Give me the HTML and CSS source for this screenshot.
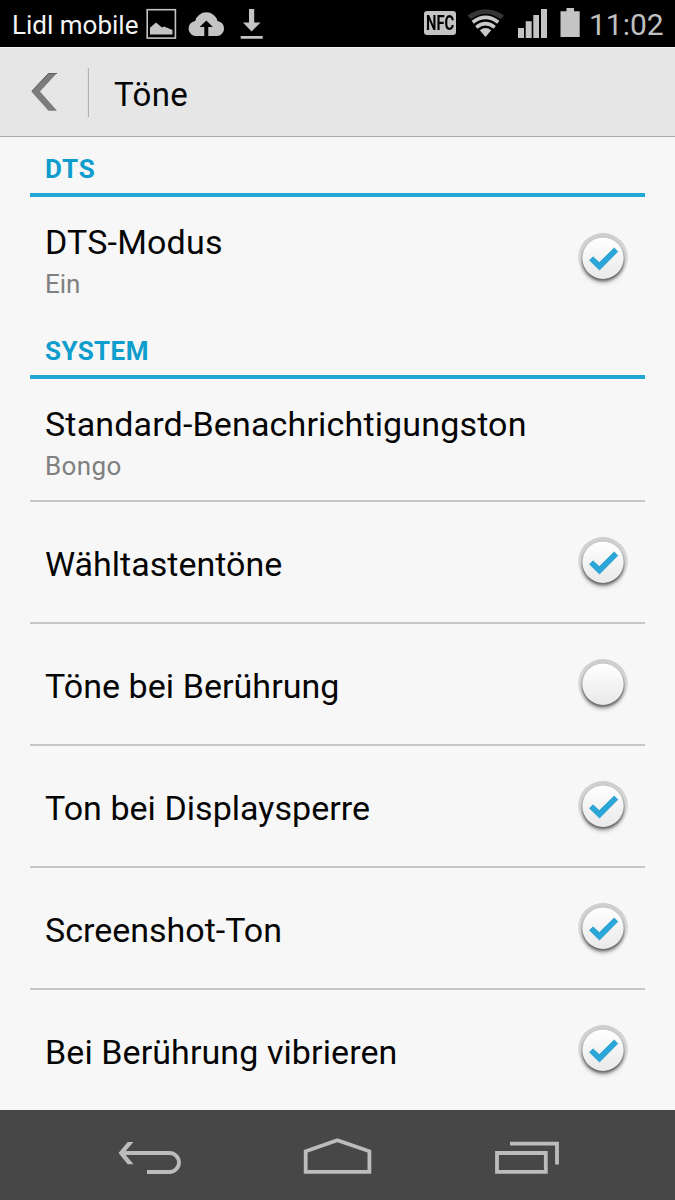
FILE: index.html
```html
<!DOCTYPE html>
<html lang="de">
<head>
<meta charset="utf-8">
<title>Töne</title>
<link rel="stylesheet" href="styles.css">
</head>
<body>
<svg class="defs" width="0" height="0">
  <defs>
    <linearGradient id="knob" x1="0" y1="0" x2="0" y2="1"><stop offset="0" stop-color="#fff"/><stop offset="1" stop-color="#e9e9e9"/></linearGradient>
    <linearGradient id="ring" x1="0" y1="0" x2="0" y2="1"><stop offset="0" stop-color="#cdcdcd"/><stop offset=".5" stop-color="#dadada"/><stop offset="1" stop-color="#f5f5f5"/></linearGradient>
    <filter id="soft" x="-30%" y="-30%" width="160%" height="170%"><feGaussianBlur stdDeviation="2"/></filter>
    <filter id="edge" x="-20%" y="-20%" width="140%" height="140%"><feGaussianBlur stdDeviation=".8"/></filter>
    <symbol id="off" viewBox="0 0 60 64">
      <circle cx="30" cy="29" r="25" fill="url(#ring)"/>
      <circle cx="30" cy="33.500" r="20" fill="#888" opacity=".75" filter="url(#soft)"/>
      <circle cx="30" cy="30.600" r="21" fill="#606060" filter="url(#edge)"/>
      <circle cx="30" cy="29.200" r="20.700" fill="url(#knob)"/>
    </symbol>
    <symbol id="on" viewBox="0 0 60 64">
      <use href="#off"/>
      <path d="M16.500 31.300l3.500-3.500 6.300 5.800 14.900-14.700 3.600 3.700-18.300 18.500z" fill="#2aa7d8" stroke="#168fc2" stroke-width=".6"/>
    </symbol>
  </defs>
</svg>
<div class="status">
  <span class="carrier">Lidl mobile</span>
  <svg class="notices" viewBox="144 0 124 47"><rect x="147.2" y="9.7" width="28.2" height="28.4" fill="none" stroke="#c4c4c4" stroke-width="1.6"/><path d="M150 34.500v-6.700l6-5.300 6 5 2-1 8.500 3.500v4.500z" fill="#c4c4c4"/><path fill="#c4c4c4" fill-rule="evenodd" d="M197 36a7.600 7.600 0 0 1-1.800-15.100 11.500 11.500 0 0 1 22.300 0A7.600 7.600 0 0 1 215.500 36H208.300V27H212.800L206.300 20.500 199.600 27H204.300V36z"/><path fill="#c4c4c4" d="M249 9h5.200v13.500h6.300l-9 9-8.500-9h6zM240.700 36h22v2.800h-22z"/></svg>
  <span class="fill"></span>
  <span class="nfc"><span>NFC</span></span>
  <svg class="signals" viewBox="464 0 120 47"><path d="M467.500 15.500Q485.500 2.800 504 15.500L500.700 19.300Q485.500 8.300 471 19.300z" fill="#363636"/><g fill="none" stroke="#c9c9c9" stroke-width="3.600"><path d="M472.700 22.300Q485.500 12.500 498.300 22.300"/><path d="M476.300 27.300Q485.500 20 494.700 27.300"/></g><path d="M479.800 30.200Q485.500 26 491.200 30.200L485.500 37z" fill="#c9c9c9"/><path d="M518 28h6v10h-6zM525.700 21.300h6V38h-6zM533.300 15h5.700v23h-5.700zM541 9h6v29h-6zM560.500 11.300h6V8h7.500v3.300h5.700V37h-19.200z" fill="#c4c4c4"/></svg>
  <span class="clock">11:02</span>
</div>
<header class="header">
  <svg class="back" width="26" height="40" viewBox="31 72 26 40"><path d="M48.500 73h8.500L40 91.500 57 110.700h-8.500L31.300 91.500z" fill="#7c7c7c"/><path d="M48.500 73.500h8.500M32 91L48.500 73.500" stroke="#5f5f5f" fill="none"/></svg>
  <span class="divider"></span>
  <h1>Töne</h1>
</header>
<main class="list">
  <h2 class="section dts">DTS</h2>
  <div class="row double first"><div class="label"><div class="title t1">DTS-Modus</div><div class="sub ein">Ein</div></div><svg class="check"><use href="#on"/></svg></div>
  <h2 class="section system">SYSTEM</h2>
  <div class="row double second"><div class="label"><div class="title t2">Standard-Benachrichtigungston</div><div class="sub bongo">Bongo</div></div></div>
  <div class="row"><div class="title t3">Wähltastentöne</div><svg class="check"><use href="#on"/></svg></div>
  <div class="row"><div class="title t4">Töne bei Berührung</div><svg class="check"><use href="#off"/></svg></div>
  <div class="row"><div class="title t5">Ton bei Displaysperre</div><svg class="check"><use href="#on"/></svg></div>
  <div class="row"><div class="title t6">Screenshot-Ton</div><svg class="check"><use href="#on"/></svg></div>
  <div class="row last"><div class="title t7">Bei Berührung vibrieren</div><svg class="check"><use href="#on"/></svg></div>
</main>
<nav class="nav">
  <svg width="675" height="90" viewBox="0 1110 675 90" fill="none" stroke="#bcbcbc" stroke-width="3.800"><path d="M121 1153h48.500a9.500 9.500 0 0 1 0 19H147"/><path d="M127.700 1142h5.800l-9.500 11 9.500 11.300h-5.800L118.500 1153z" fill="#bcbcbc" stroke="none"/><path d="M305.700 1171.900v-20.600l31.700-11.100 32 11.100v20.600z"/><path d="M497 1153h48.800v18.900H497zM510 1143.700h47V1164.500"/></svg>
</nav>
</body>
</html>
```
FILE: styles.css
```css
* { box-sizing: border-box; }
body { margin: 0; width: 675px; height: 1200px; overflow: hidden; background: #f7f7f7; font-family: Roboto, "Noto Sans", sans-serif; color: #050505; display: flex; flex-direction: column; }
.defs { display: block; position: absolute; }
.status { height: 47px; background: #000; display: flex; flex: none; white-space: nowrap; }
.carrier { width: 132px; margin-left: 12px; font-size: 26px; line-height: 51px; color: #f4f4f4; }
.notices { width: 124px; height: 47px; flex: none; }
.fill { flex: 1; }
.nfc { width: 32px; height: 24px; margin: 11px 8px 0 0; border-radius: 3px; background: #c4c4c4; color: #000; display: flex; justify-content: center; align-items: center; flex: none; }
.nfc span { font-size: 20px; font-weight: 700; transform: scaleX(.74); }
.signals { width: 120px; height: 47px; flex: none; }
.clock { width: 86px; margin-left: 5px; font-size: 30px; line-height: 50px; color: #c0c0c0; flex: none; }
.header { height: 90px; background: #e6e6e6; border-top: 1px solid #f6f6f6; border-bottom: 1px solid #aaa; display: flex; flex: none; align-items: flex-start; }
.back { margin: 24px 0 0 31px; flex: none; }
.divider { width: 2px; height: 49px; margin: 20px 0 0 30px; background: #dedede; border-right: 1px solid #b0b0b0; }
h1 { margin: 0 0 0 25px; font-size: 33px; font-weight: 400; line-height: 93px; letter-spacing: .4px; }
.list { height: 973px; flex: none; padding: 0 30px; }
.section { margin: 0; height: 60px; padding-left: 15px; border-bottom: 4px solid #22a6d6; color: #0f9dce; font-size: 26px; line-height: 64px; font-weight: 700; }
.dts { letter-spacing: .9px; }
.system { letter-spacing: .4px; }
.row { height: 122px; padding-left: 15px; display: flex; justify-content: space-between; border-bottom: 2px solid #c6c6c6; white-space: nowrap; }
.second { height: 123px; }
.first, .last { border-bottom: 0; }
.title { font-size: 34px; line-height: 124px; }
.double .title { line-height: 40px; margin-top: 25px; }
.t1 { letter-spacing: .18px; }
.t2 { letter-spacing: .16px; }
.t4 { letter-spacing: .06px; }
.t5 { letter-spacing: .04px; }
.t7 { letter-spacing: .09px; }
.sub { font-size: 26px; line-height: 32px; margin-top: 6px; color: #808080; }
.bongo { letter-spacing: .4px; }
.check { width: 60px; height: 64px; margin: 31px 12px 0 0; flex: none; }
.first .check { margin-top: 32px; }
.nav { height: 90px; background: #474747; flex: none; }
.nav svg { display: block; }
```
